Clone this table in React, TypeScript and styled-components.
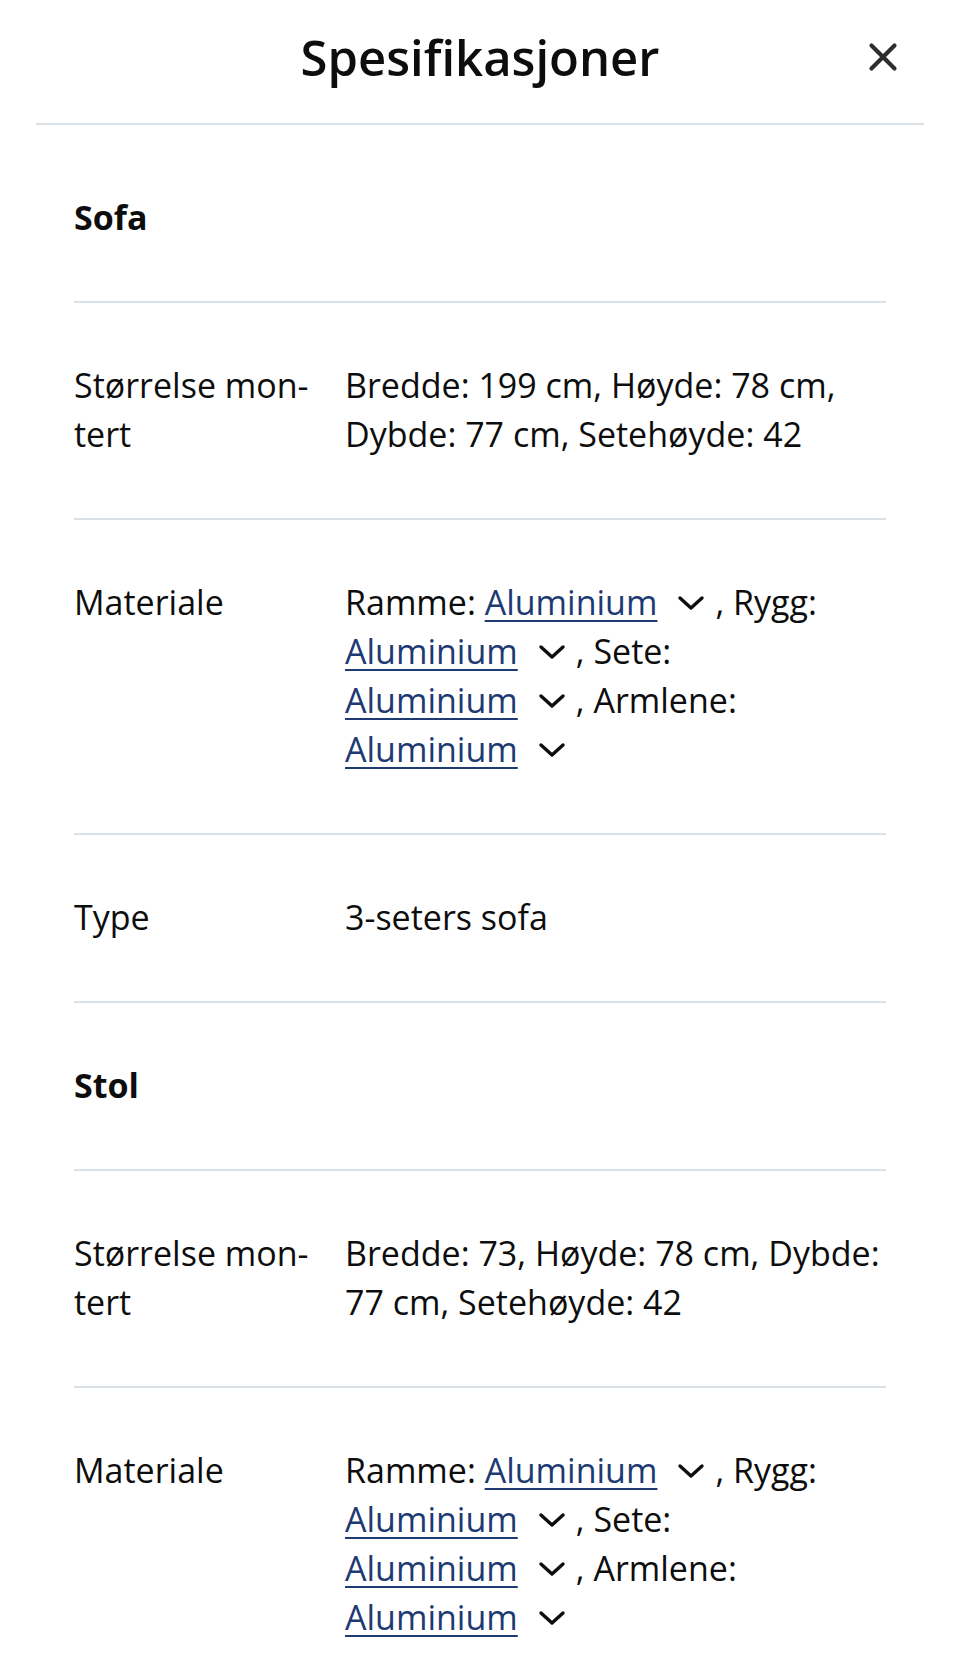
import React from "react";
import styled, { createGlobalStyle } from "styled-components";

const Global = createGlobalStyle`
  html, body { margin: 0; padding: 0; background: #fff; }
  body { font-family: "Open Sans", "Noto Sans", sans-serif; color: #0d0d0d; }
`;

const Page = styled.div`
  width: 960px;
  background: #fff;
`;

const Header = styled.header`
  margin: 0 36px;
  height: 113px;
  padding-bottom: 10px;
  display: grid;
  grid-template-columns: 1fr auto 1fr;
  align-items: center;
  border-bottom: 2px solid #dbe2e7;
`;

const Title = styled.h1`
  grid-column: 2;
  margin: 0;
  font-size: 49px;
  font-weight: 600;
  line-height: 60px;
  color: #0d0d0d;
`;

const CloseButton = styled.button`
  grid-column: 3;
  justify-self: end;
  margin-right: 25px;
  width: 32px;
  height: 32px;
  padding: 0;
  border: 0;
  background: none;
  display: flex;
  align-items: center;
  justify-content: center;
  color: #2e2e2e;
`;

const Content = styled.div`
  padding: 10px 74px 0;
`;

const Row = styled.div<{ $last?: boolean }>`
  display: grid;
  grid-template-columns: 271px 1fr;
  padding: 58px 0 59px;
  border-bottom: ${(p) => (p.$last ? "none" : "2px solid #dbe2e7")};
  font-size: 34px;
  line-height: 49px;
`;

const SectionTitle = styled.div`
  grid-column: 1 / -1;
  font-weight: 700;
  color: #0d0d0d;
`;

const Label = styled.div`
  padding-right: 22px;
  color: #0d0d0d;
`;

const Value = styled.div`
  color: #0d0d0d;
`;

const MaterialItem = styled.span`
  white-space: nowrap;
`;

const MaterialLink = styled.a`
  color: #1d3a72;
  text-decoration: underline;
  text-decoration-thickness: 2px;
  text-underline-offset: 5px;
  cursor: pointer;
`;

const Toggle = styled.span`
  display: inline-flex;
  align-items: center;
  vertical-align: middle;
  margin: -6px 10px 0 20px;
  width: 28px;
  height: 26px;
  color: #0d0d0d;
`;

const Chevron = () => (
  <Toggle>
    <svg width="28" height="26" viewBox="0 0 28 26" fill="none">
      <path d="M3 8 L14 18 L25 8" stroke="currentColor" strokeWidth="3.4" strokeLinecap="round" strokeLinejoin="round" />
    </svg>
  </Toggle>
);

const Material = ({ name }: { name: string }) => (
  <MaterialItem>
    <MaterialLink>{name}</MaterialLink>
    <Chevron />
  </MaterialItem>
);

const MaterialValue = () => (
  <Value>
    Ramme: <Material name="Aluminium" />, Rygg: <Material name="Aluminium" />, Sete:{" "}
    <Material name="Aluminium" />, Armlene: <Material name="Aluminium" />
  </Value>
);

export default function App() {
  return (
    <Page>
      <Global />
      <Header>
        <Title>Spesifikasjoner</Title>
        <CloseButton aria-label="Lukk">
          <svg width="30" height="30" viewBox="0 0 30 30" fill="none">
            <path d="M3.5 3.5 L26.5 26.5 M26.5 3.5 L3.5 26.5" stroke="currentColor" strokeWidth="4.2" strokeLinecap="round" />
          </svg>
        </CloseButton>
      </Header>
      <Content>
        <Row>
          <SectionTitle>Sofa</SectionTitle>
        </Row>
        <Row>
          <Label>Størrelse mon{"\u00AD"}tert</Label>
          <Value>Bredde: 199 cm, Høyde: 78 cm, Dybde: 77 cm, Setehøyde: 42</Value>
        </Row>
        <Row>
          <Label>Materiale</Label>
          <MaterialValue />
        </Row>
        <Row>
          <Label>Type</Label>
          <Value>3-seters sofa</Value>
        </Row>
        <Row>
          <SectionTitle>Stol</SectionTitle>
        </Row>
        <Row>
          <Label>Størrelse mon{"\u00AD"}tert</Label>
          <Value>Bredde: 73, Høyde: 78 cm, Dybde: 77 cm, Setehøyde: 42</Value>
        </Row>
        <Row $last>
          <Label>Materiale</Label>
          <MaterialValue />
        </Row>
      </Content>
    </Page>
  );
}
